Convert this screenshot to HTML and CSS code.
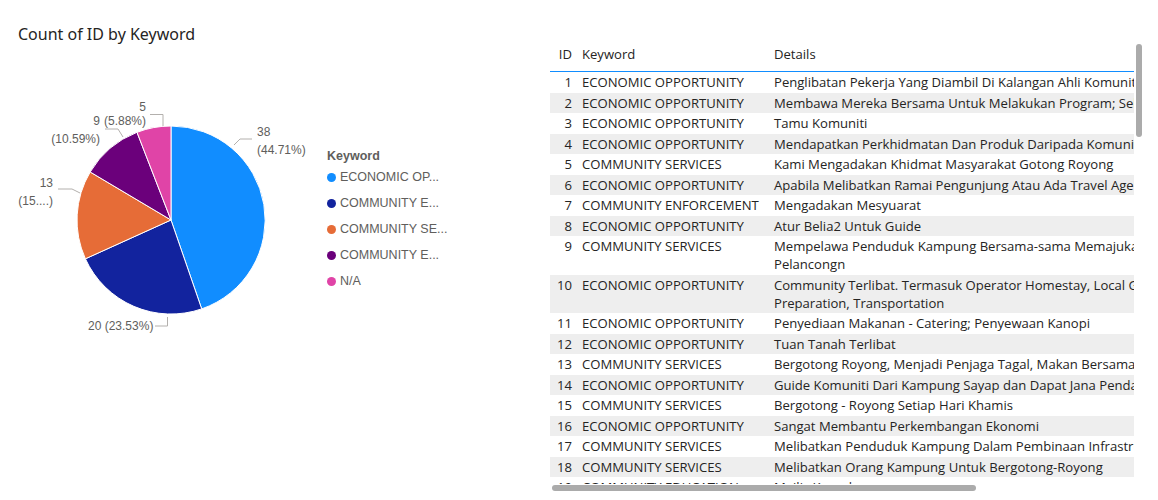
FILE: index.html
```html
<!DOCTYPE html>
<html lang="ms">
<head>
<meta charset="utf-8">
<title>Count of ID by Keyword</title>
<link rel="stylesheet" href="styles.css">
</head>
<body>
<div class="page">
  <section class="chart-visual">
    <h2 class="chart-title">Count of ID by Keyword</h2>
    <div class="chart-body">
      <svg class="pie" width="320" height="260" viewBox="0 95 320 260" xmlns="http://www.w3.org/2000/svg">
        <g stroke="#ffffff" stroke-width="1" stroke-linejoin="round">
          <path d="M171 220 L171 126 A94 94 0 0 1 201.7 308.9 Z" fill="#118DFF"/>
          <path d="M171 220 L201.7 308.9 A94 94 0 0 1 85.4 258.8 Z" fill="#12239E"/>
          <path d="M171 220 L85.4 258.8 A94 94 0 0 1 90.2 172.0 Z" fill="#E66C37"/>
          <path d="M171 220 L90.2 172.0 A94 94 0 0 1 137.0 132.3 Z" fill="#6B007B"/>
          <path d="M171 220 L137.0 132.3 A94 94 0 0 1 171 126 Z" fill="#E044A7"/>
        </g>
        <g fill="none" stroke="#b3b0ad" stroke-width="1">
          <polyline points="234,145 240,139 252,139"/>
          <polyline points="167.5,317 167.5,326 155,326"/>
          <polyline points="80,193 72,189 58,189"/>
          <polyline points="123,137 118,129 105,129"/>
          <polyline points="163,126 163,114.5 150,114.5"/>
        </g>
        <g class="pie-label">
          <text x="257" y="135.5">38</text>
          <text x="257" y="153.5">(44.71%)</text>
          <text x="88" y="330">20 (23.53%)</text>
          <text x="53" y="186.5" text-anchor="end">13</text>
          <text x="53" y="204.5" text-anchor="end">(15....)</text>
          <text x="100" y="124.5" text-anchor="end">9</text>
          <text x="100" y="142.5" text-anchor="end">(10.59%)</text>
          <text x="146" y="110.5" text-anchor="end">5</text>
          <text x="146" y="124.5" text-anchor="end">(5.88%)</text>
        </g>
      </svg>
      <div class="legend">
        <div class="legend-title">Keyword</div>
        <div class="legend-item"><span class="dot dot-blue"></span>ECONOMIC OP...</div>
        <div class="legend-item"><span class="dot dot-navy"></span>COMMUNITY E...</div>
        <div class="legend-item"><span class="dot dot-orange"></span>COMMUNITY SE...</div>
        <div class="legend-item"><span class="dot dot-purple"></span>COMMUNITY E...</div>
        <div class="legend-item"><span class="dot dot-pink"></span>N/A</div>
      </div>
    </div>
  </section>

  <section class="table-visual">
    <div class="table-clip">
      <table class="grid">
        <colgroup><col class="w-id"><col class="w-kw"><col class="w-det"></colgroup>
        <thead>
          <tr><th class="c-id">ID</th><th class="c-kw">Keyword</th><th class="c-det">Details</th></tr>
        </thead>
        <tbody>
          <tr><td class="c-id">1</td><td class="c-kw">ECONOMIC OPPORTUNITY</td><td class="c-det">Penglibatan Pekerja Yang Diambil Di Kalangan Ahli Komuniti</td></tr>
          <tr><td class="c-id">2</td><td class="c-kw">ECONOMIC OPPORTUNITY</td><td class="c-det">Membawa Mereka Bersama Untuk Melakukan Program; Sebagai Tuan Rumah</td></tr>
          <tr><td class="c-id">3</td><td class="c-kw">ECONOMIC OPPORTUNITY</td><td class="c-det">Tamu Komuniti</td></tr>
          <tr><td class="c-id">4</td><td class="c-kw">ECONOMIC OPPORTUNITY</td><td class="c-det">Mendapatkan Perkhidmatan Dan Produk Daripada Komuniti</td></tr>
          <tr><td class="c-id">5</td><td class="c-kw">COMMUNITY SERVICES</td><td class="c-det">Kami Mengadakan Khidmat Masyarakat Gotong Royong</td></tr>
          <tr><td class="c-id">6</td><td class="c-kw">ECONOMIC OPPORTUNITY</td><td class="c-det">Apabila Melibatkan Ramai Pengunjung Atau Ada Travel Agent</td></tr>
          <tr><td class="c-id">7</td><td class="c-kw">COMMUNITY ENFORCEMENT</td><td class="c-det">Mengadakan Mesyuarat</td></tr>
          <tr><td class="c-id">8</td><td class="c-kw">ECONOMIC OPPORTUNITY</td><td class="c-det">Atur Belia2 Untuk Guide</td></tr>
          <tr><td class="c-id">9</td><td class="c-kw">COMMUNITY SERVICES</td><td class="c-det">Mempelawa Penduduk Kampung Bersama-sama Memajukan Industri<br>Pelancongn</td></tr>
          <tr><td class="c-id">10</td><td class="c-kw">ECONOMIC OPPORTUNITY</td><td class="c-det">Community Terlibat. Termasuk Operator Homestay, Local Guide, Food<br>Preparation, Transportation</td></tr>
          <tr><td class="c-id">11</td><td class="c-kw">ECONOMIC OPPORTUNITY</td><td class="c-det">Penyediaan Makanan - Catering; Penyewaan Kanopi</td></tr>
          <tr><td class="c-id">12</td><td class="c-kw">ECONOMIC OPPORTUNITY</td><td class="c-det">Tuan Tanah Terlibat</td></tr>
          <tr><td class="c-id">13</td><td class="c-kw">COMMUNITY SERVICES</td><td class="c-det">Bergotong Royong, Menjadi Penjaga Tagal, Makan Bersama</td></tr>
          <tr><td class="c-id">14</td><td class="c-kw">ECONOMIC OPPORTUNITY</td><td class="c-det">Guide Komuniti Dari Kampung Sayap dan Dapat Jana Pendapatan</td></tr>
          <tr><td class="c-id">15</td><td class="c-kw">COMMUNITY SERVICES</td><td class="c-det">Bergotong - Royong Setiap Hari Khamis</td></tr>
          <tr><td class="c-id">16</td><td class="c-kw">ECONOMIC OPPORTUNITY</td><td class="c-det">Sangat Membantu Perkembangan Ekonomi</td></tr>
          <tr><td class="c-id">17</td><td class="c-kw">COMMUNITY SERVICES</td><td class="c-det">Melibatkan Penduduk Kampung Dalam Pembinaan Infrastruktur</td></tr>
          <tr><td class="c-id">18</td><td class="c-kw">COMMUNITY SERVICES</td><td class="c-det">Melibatkan Orang Kampung Untuk Bergotong-Royong</td></tr>
          <tr><td class="c-id">19</td><td class="c-kw">COMMUNITY EDUCATION</td><td class="c-det">Majlis Kesyukuran</td></tr>
          <tr><td class="c-id">20</td><td class="c-kw">ECONOMIC OPPORTUNITY</td><td class="c-det">Jualan Produk Tempatan</td></tr>
        </tbody>
      </table>
    </div>
    <div class="vscroll"></div>
    <div class="hscroll"></div>
  </section>
</div>
</body>
</html>
```

FILE: styles.css
```css
* { box-sizing: border-box; }
html, body { margin: 0; padding: 0; background: #ffffff; }
body { font-family: "Liberation Sans", Arial, sans-serif; color: #252423; }

.page {
  display: flex;
  width: 1158px;
  height: 500px;
  overflow: hidden;
}

/* ---------- chart ---------- */
.chart-visual {
  width: 550px;
  flex: none;
  padding-top: 24px;
}
.chart-title {
  margin: 0 0 0 18px;
  font-family: "Noto Sans", sans-serif;
  font-weight: 400;
  font-size: 16px;
  line-height: 20px;
  height: 20px;
  color: #252423;
}
.chart-body {
  display: flex;
  margin-top: 51px;
}
.pie { display: block; flex: none; }
.pie-label {
  font-family: "Liberation Sans", Arial, sans-serif;
  font-size: 12px;
  fill: #605E5C;
}
.legend {
  margin-left: 7px;
  padding-top: 53px;
  display: flex;
  flex-direction: column;
}
.legend-title {
  font-weight: 700;
  font-size: 12.5px;
  line-height: 16px;
  color: #605E5C;
}
.legend-item {
  display: flex;
  align-items: center;
  height: 26px;
  font-size: 12.5px;
  color: #605E5C;
  white-space: nowrap;
}
.dot {
  width: 9px;
  height: 9px;
  border-radius: 50%;
  margin-right: 4px;
  flex: none;
}
.dot-blue { background: #118DFF; }
.dot-navy { background: #12239E; }
.dot-orange { background: #E66C37; }
.dot-purple { background: #6B007B; }
.dot-pink { background: #E044A7; }

/* ---------- table ---------- */
.table-visual {
  position: relative;
  flex: none;
  width: 608px;
  padding-top: 44px;
}
.table-clip {
  width: 584px;
  height: 440px;
  overflow: hidden;
}
.grid {
  table-layout: fixed;
  width: 840px;
  border-collapse: collapse;
  font-family: "Open Sans", sans-serif;
  font-size: 13.1px;
  line-height: 18px;
  color: #252423;
  white-space: nowrap;
}
.w-id { width: 27px; }
.w-kw { width: 192px; }
.w-det { width: 621px; }
.grid th {
  font-weight: 400;
  text-align: left;
  padding: 1px 5px 8px;
  border-bottom: 1px solid #118DFF;
}
.grid td {
  padding: 1.25px 5px;
  vertical-align: top;
  overflow: hidden;
}
.grid tbody tr:nth-child(even) td { background: #EEEEEE; }
.grid .c-id { text-align: right; padding-left: 0; }

.vscroll {
  position: absolute;
  left: 586px;
  top: 44px;
  width: 6px;
  height: 93px;
  border-radius: 3px;
  background: #ABABAB;
}
.hscroll {
  position: absolute;
  left: 2px;
  top: 485px;
  width: 424px;
  height: 6px;
  border-radius: 3px;
  background: #ABABAB;
}
```
